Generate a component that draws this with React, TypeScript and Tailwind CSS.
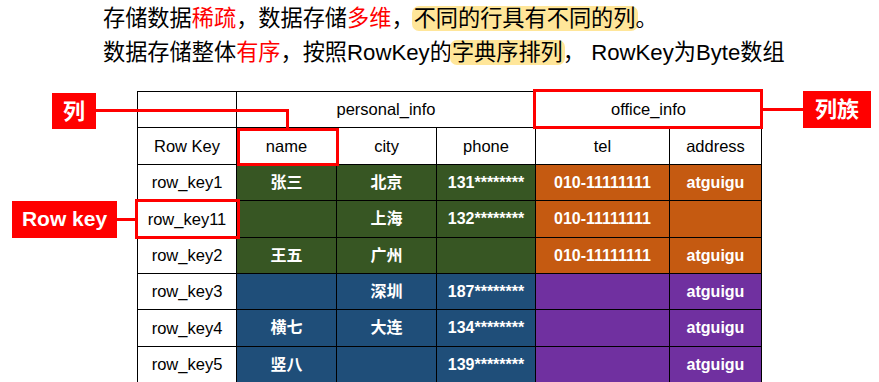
import React from "react";

const G = "bg-[#375623]";
const O = "bg-[#c55a11]";
const B = "bg-[#1f4e79]";
const P = "bg-[#7030a0]";

type Row = { key: string; cells: [string, string][] };

const rows: Row[] = [
  { key: "row_key1", cells: [["张三", G], ["北京", G], ["131********", G], ["010-11111111", O], ["atguigu", O]] },
  { key: "row_key11", cells: [["", G], ["上海", G], ["132********", G], ["010-11111111", O], ["", O]] },
  { key: "row_key2", cells: [["王五", G], ["广州", G], ["", G], ["010-11111111", O], ["atguigu", O]] },
  { key: "row_key3", cells: [["", B], ["深圳", B], ["187********", B], ["", P], ["atguigu", P]] },
  { key: "row_key4", cells: [["横七", B], ["大连", B], ["134********", B], ["", P], ["atguigu", P]] },
  { key: "row_key5", cells: [["竖八", B], ["", B], ["139********", B], ["", P], ["atguigu", P]] },
];

const cell = "flex items-center justify-center border-r border-b border-black";
const font = { fontFamily: '"Liberation Sans", "Noto Sans CJK SC", sans-serif' };
const label = "bg-[#ff0000] text-white font-bold flex items-center justify-center whitespace-nowrap";
const box = "border-[3px] border-[#ff0000]";

export default function App() {
  return (
    <div
      className="relative w-[879px] h-[382px] overflow-hidden bg-white text-black"
      style={font}
    >
      <div className="h-[91px] pt-[2px] pl-[103px] text-[22.2px]">
        <div className="h-[34px] leading-[34px] whitespace-nowrap">
          存储数据<span className="text-[#ff0000]">稀疏</span>，数据存储
          <span className="text-[#ff0000]">多维</span>，
          <span className="bg-[#ffe699] rounded-[7px] px-[2px] -mx-[2px]">不同的行具有不同的列</span>。
        </div>
        <div className="h-[34px] leading-[34px] whitespace-nowrap">
          数据存储整体<span className="text-[#ff0000]">有序</span>，按照RowKey的
          <span className="bg-[#ffe699] rounded-[7px] px-[2px] -mx-[2px]">字典序排列</span>，
          {" "}RowKey为Byte数组
        </div>
      </div>

      <div className="ml-[137px] w-[625px] grid grid-cols-[99px_100px_100px_99px_134px_92px] grid-rows-[36px_37px_36px_37px_36px_36px_37px_36px] border-l border-t border-black">
        <div className={cell}></div>
        <div className={`${cell} col-span-3 text-[16.5px]`}>personal_info</div>
        <div className={`${cell} col-span-2 text-[16.5px]`}>office_info</div>
        {["Row Key", "name", "city", "phone", "tel", "address"].map((h) => (
          <div key={h} className={`${cell} text-[16.5px]`}>
            {h}
          </div>
        ))}
        {rows.map((r) => (
          <React.Fragment key={r.key}>
            <div className={`${cell} text-[16.5px]`}>{r.key}</div>
            {r.cells.map(([t, bg], i) => (
              <div key={i} className={`${cell} ${bg} text-white font-bold text-[16px]`}>
                {t}
              </div>
            ))}
          </React.Fragment>
        ))}
      </div>

      {/* callout: 列 -> name */}
      <div className="absolute left-[52px] top-[93px] flex items-start">
        <div className={`${label} w-[44px] h-[36px] text-[22px]`}>列</div>
        <div className="flex flex-col items-end mt-[16px]">
          <div className="w-[193px] h-[19px] border-t-[3px] border-r-[3px] border-[#ff0000]" />
          <div className={`${box} w-[102px] h-[38px] -mr-[50px]`} />
        </div>
      </div>

      {/* callout: Row key */}
      <div className="absolute left-[12px] top-[199px] flex items-center">
        <div className={`${label} w-[105px] h-[37px] text-[21px]`}>Row key</div>
        <div className="w-[18px] h-[3px] bg-[#ff0000]" />
        <div className={`${box} w-[105px] h-[40px]`} />
      </div>

      {/* callout: 列族 */}
      <div className="absolute left-[533px] top-[89px] flex items-center">
        <div className={`${box} w-[230px] h-[40px]`} />
        <div className="w-[40px] h-[3px] bg-[#ff0000]" />
        <div className={`${label} w-[68px] h-[37px] text-[22px]`}>列族</div>
      </div>
    </div>
  );
}
